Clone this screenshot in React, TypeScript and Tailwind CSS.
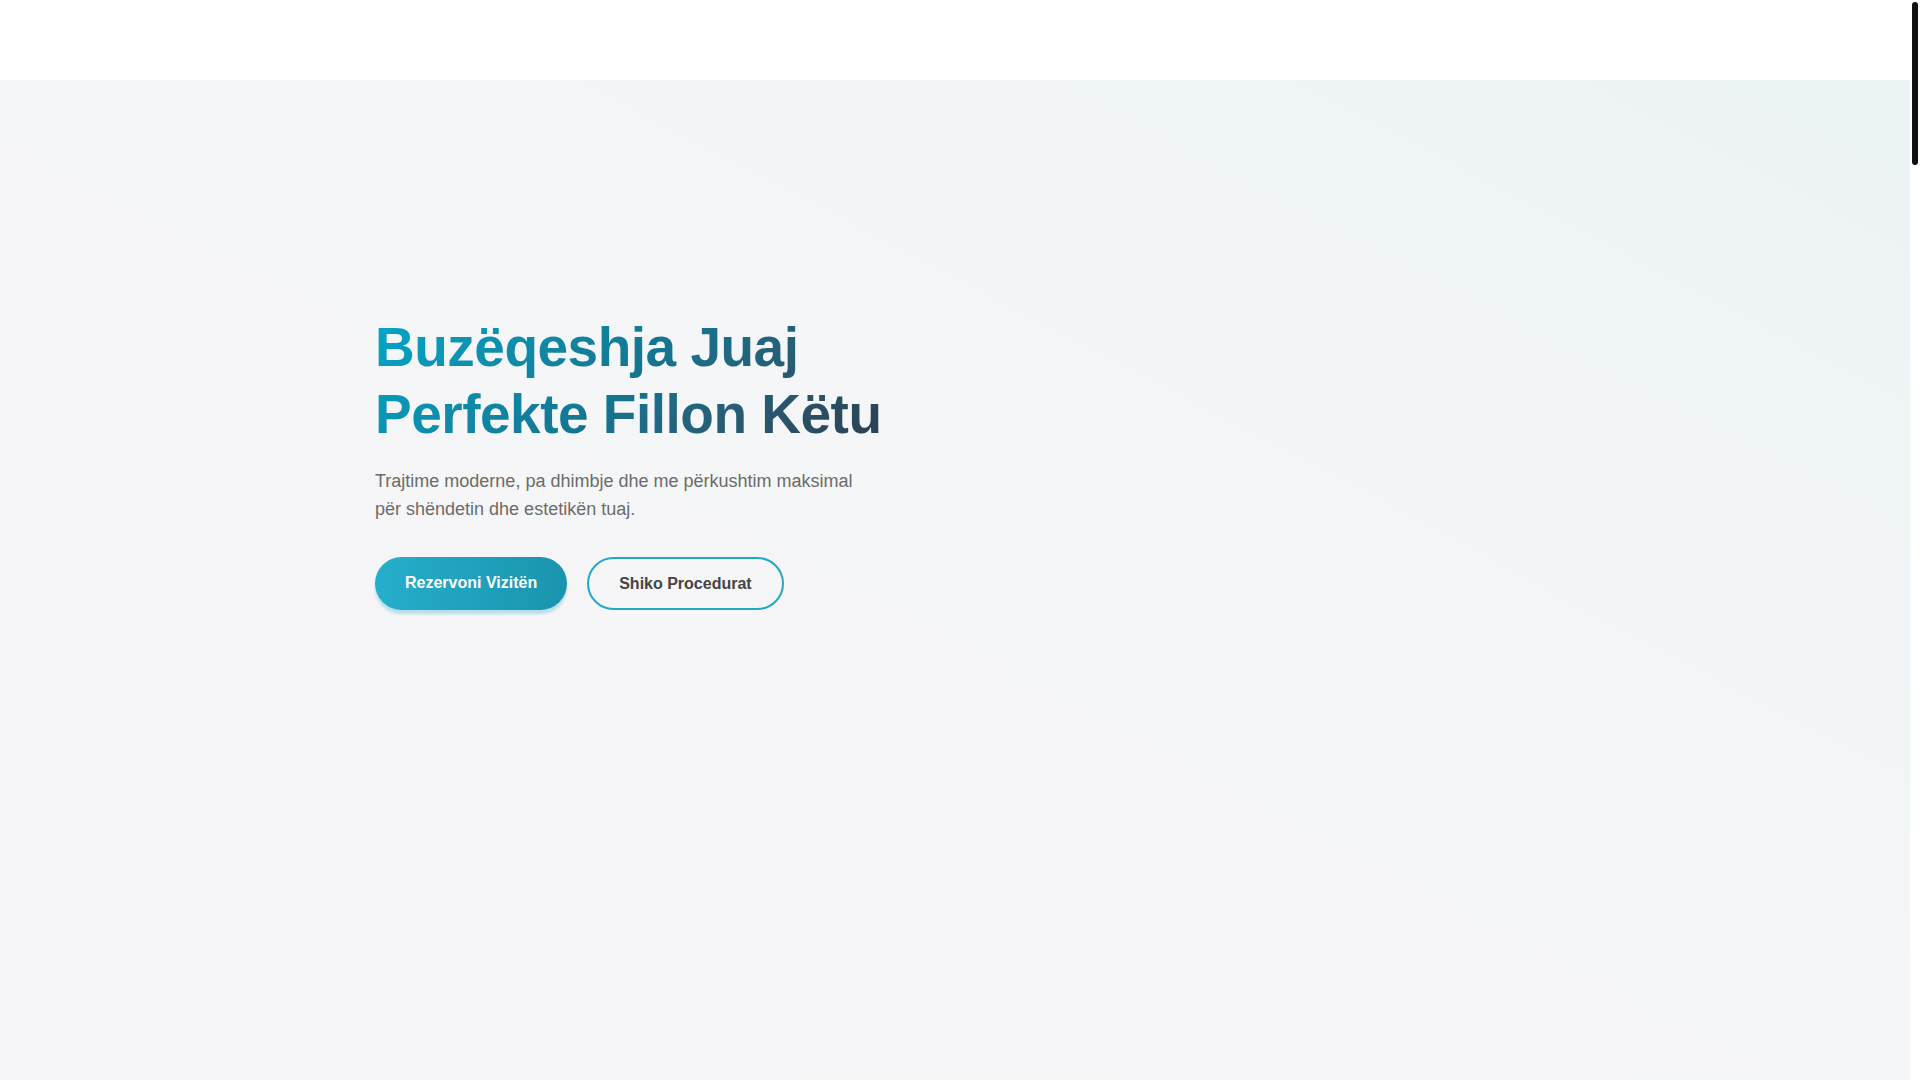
export default function App() {
  return (
    <div className="flex h-screen overflow-hidden bg-white" style={{ fontFamily: '"Liberation Sans", Arial, sans-serif' }}>
      <main className="min-w-0 flex-1">
        {/* header (empty nav bar) */}
        <header className="h-20 bg-white" />

        {/* hero */}
        <section className="h-[1000px] bg-linear-to-tr from-[#f6f5f7] via-[#f5f6f7] to-[#ecf3f5]">
          <div className="mx-auto max-w-[1200px] px-5 pt-[234px]">
            <h1 className="w-fit bg-linear-135 from-[#00a7c8] via-[#137591] to-[#2c3e50] bg-clip-text text-[55px] font-bold leading-[67px] tracking-[-0.5px] text-transparent">
              Buzëqeshja Juaj
              <br />
              Perfekte Fillon Këtu
            </h1>
            <p className="mt-[19px] max-w-[500px] text-[18px] leading-[28px] text-[#6b6b6b]">
              Trajtime moderne, pa dhimbje dhe me përkushtim maksimal për shëndetin dhe estetikën tuaj.
            </p>
            <div className="mt-[34px] flex items-center gap-5">
              <button className="flex h-[53px] items-center rounded-full bg-linear-to-r from-[#26aecb] to-[#1a94ae] px-[30px] pb-[2px] text-base font-bold text-white shadow-[0_4px_3px_rgba(40,170,205,0.3)]">
                Rezervoni Vizitën
              </button>
              <button className="flex h-[53px] items-center rounded-full border-2 border-[#1fa9c9] bg-transparent px-[30px] text-base font-bold text-[#444]">
                Shiko Procedurat
              </button>
            </div>
          </div>
        </section>
      </main>

      {/* page scrollbar (thin black thumb at the top of a white track) */}
      <aside className="w-[10px] shrink-0 bg-white px-[2px] pt-[2px]">
        <div className="h-[163px] w-[6px] rounded-full bg-[#111]" />
      </aside>
    </div>
  );
}
